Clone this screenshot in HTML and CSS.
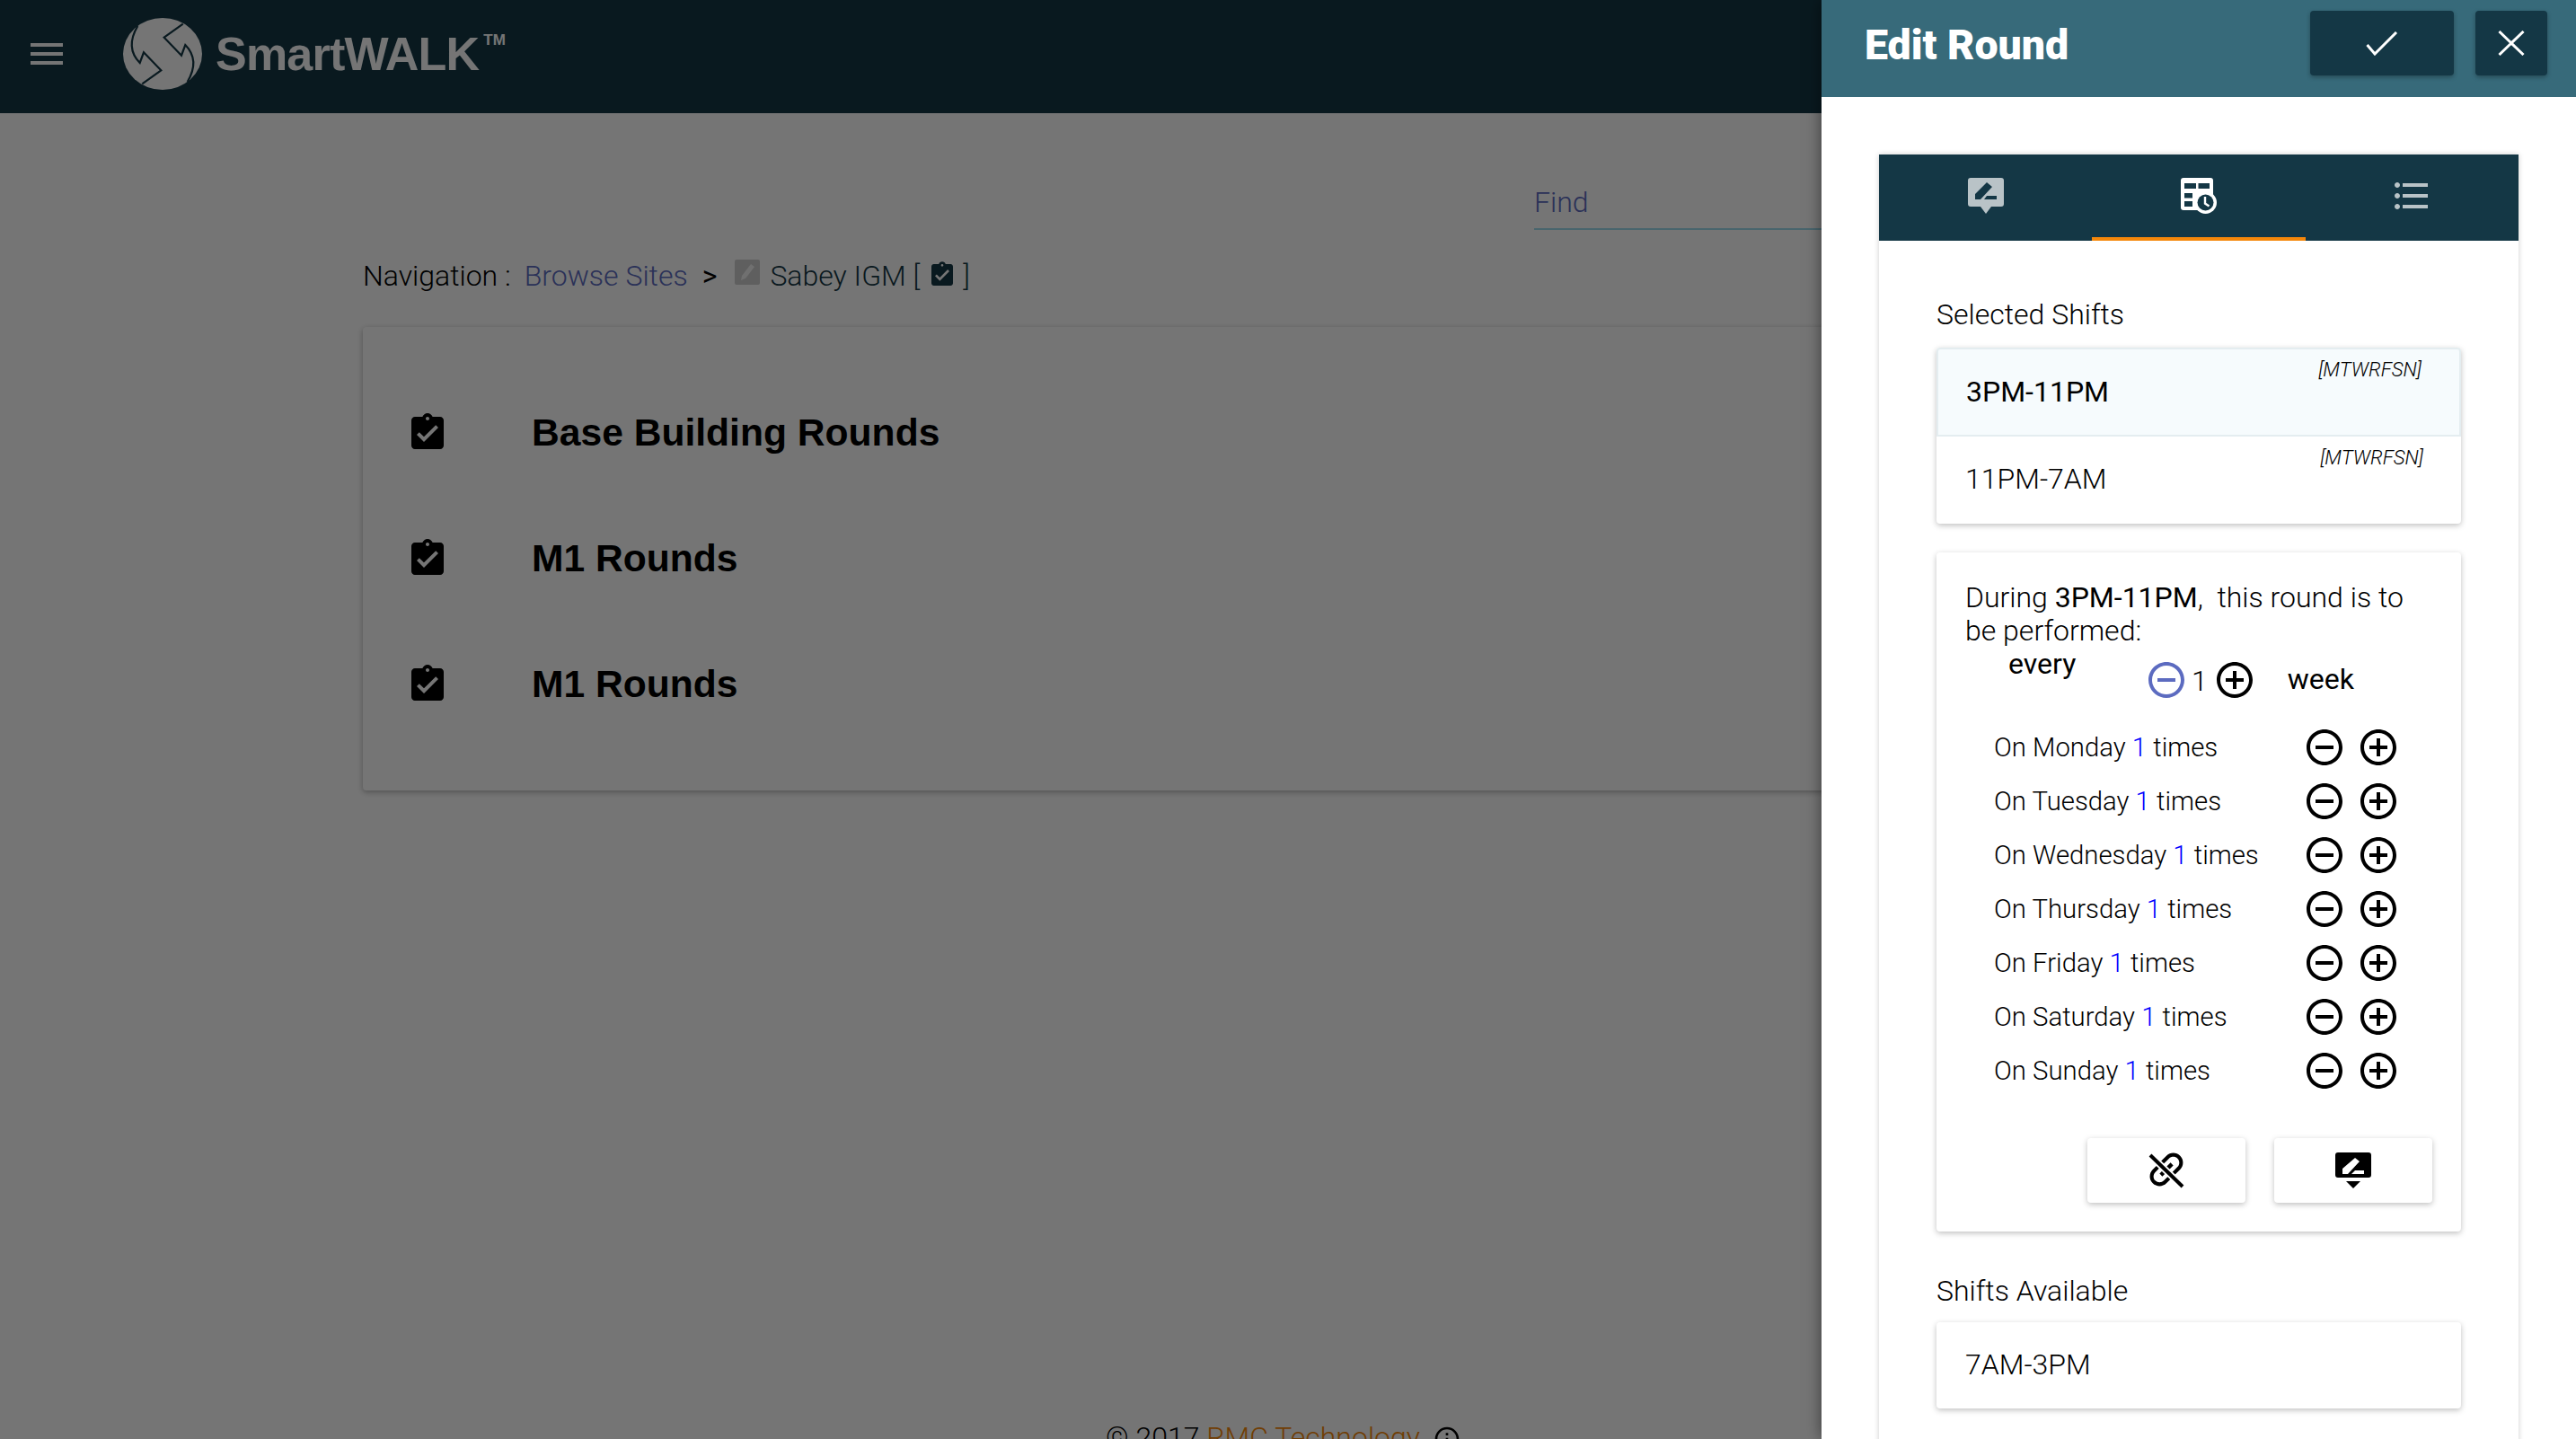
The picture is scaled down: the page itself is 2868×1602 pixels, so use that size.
FILE: index.html
```html
<!DOCTYPE html>
<html>
<head>
    <meta charset="UTF-8">
    <title>SmartWALK</title>
    <link rel="stylesheet" href="styles.css">
</head>
<body>
    <svg class="defs" width="0" height="0">
        <defs>
            <path id="i-minus" d="M7 11v2h10v-2H7zm5-9C6.48 2 2 6.48 2 12s4.48 10 10 10 10-4.48 10-10S17.52 2 12 2zm0 18c-4.41 0-8-3.59-8-8s3.59-8 8-8 8 3.59 8 8-3.59 8-8 8z"/>
            <path id="i-plus" d="M13 7h-2v4H7v2h4v4h2v-4h4v-2h-4V7zm-1-5C6.48 2 2 6.48 2 12s4.48 10 10 10 10-4.48 10-10S17.52 2 12 2zm0 18c-4.41 0-8-3.59-8-8s3.59-8 8-8 8 3.59 8 8-3.59 8-8 8z"/>
            <path id="i-round" d="M19 3h-4.18C14.4 1.84 13.3 1 12 1c-1.3 0-2.4.84-2.82 2H5c-1.1 0-2 .9-2 2v14c0 1.1.9 2 2 2h14c1.1 0 2-.9 2-2V5c0-1.1-.9-2-2-2zm-7 0c.55 0 1 .45 1 1s-.45 1-1 1-1-.45-1-1 .45-1 1-1zm-2 14l-4-4 1.41-1.41L10 14.17l6.59-6.59L18 9l-8 8z"/>
        </defs>
    </svg>

    <div class="page">
        <header class="topbar">
            <svg class="menu-icon" viewBox="0 0 24 24"><path d="M3 18h18v-2H3v2zm0-5h18v-2H3v2zm0-7v2h18V6H3z"/></svg>
            <svg class="logo" viewBox="0 0 88 80">
                <ellipse cx="44" cy="40" rx="44" ry="40" fill="#fff"/>
                <path class="logo-cut" d="M66.7 6.7L45.7 21.7 65 41.7 69.3 30Q86 47 71.7 71"/>
                <path class="logo-cut" d="M21.3 73.3L42.3 58.3 23 38.3 18.7 50Q2 33 16.3 9"/>
            </svg>
            <div class="brand">SmartWALK<span class="tm">TM</span></div>
        </header>

        <main class="content">
            <div class="find">Find</div>
            <nav class="crumbs">
                <span>Navigation :</span>
                <a class="crumb-link">Browse Sites</a>
                <span class="crumb-sep">&gt;</span>
                <svg class="crumb-thumb" viewBox="0 0 28 28">
                    <rect width="28" height="28" rx="2" fill="#cfcfcf"/>
                    <path d="M18 5l4 3-10 13-5 2 1-5z" fill="#f4f4f4"/>
                </svg>
                <span class="crumb-site">Sabey IGM [</span>
                <svg class="crumb-icon" viewBox="0 0 24 24"><use href="#i-round"/></svg>
                <span class="crumb-site crumb-end">]</span>
            </nav>

            <section class="rounds">
                <div class="round-row">
                    <svg class="round-icon" viewBox="0 0 24 24"><use href="#i-round"/></svg>
                    <span class="round-name">Base Building Rounds</span>
                </div>
                <div class="round-row">
                    <svg class="round-icon" viewBox="0 0 24 24"><use href="#i-round"/></svg>
                    <span class="round-name">M1 Rounds</span>
                </div>
                <div class="round-row">
                    <svg class="round-icon" viewBox="0 0 24 24"><use href="#i-round"/></svg>
                    <span class="round-name">M1 Rounds</span>
                </div>
            </section>

            <footer class="foot">
                <span>© 2017 <a class="foot-link">RMC Technology</a></span>
                <svg class="foot-icon" viewBox="0 0 24 24"><path d="M11 7h2v2h-2zm0 4h2v6h-2zm1-9C6.48 2 2 6.48 2 12s4.48 10 10 10 10-4.48 10-10S17.52 2 12 2zm0 18c-4.41 0-8-3.59-8-8s3.59-8 8-8 8 3.59 8 8-3.59 8-8 8z"/></svg>
            </footer>
        </main>
    </div>

    <div class="scrim"></div>

    <aside class="panel">
        <div class="panel-head">
            <h1>Edit Round</h1>
            <button class="head-btn head-ok">
                <svg viewBox="0 0 36 27" width="36" height="27"><path d="M1.5 15L10 25 34 1" fill="none" stroke="#fff" stroke-width="3"/></svg>
            </button>
            <button class="head-btn head-close">
                <svg viewBox="0 0 30 28" width="30" height="28"><path d="M1.5 1L28.500 27M28.500 1L1.500 27" fill="none" stroke="#fff" stroke-width="3"/></svg>
            </button>
        </div>

        <div class="panel-body">
            <div class="editor">
                <div class="tabs">
                    <div class="tab">
                        <svg class="tab-icon dim" viewBox="0 0 40 40"><path fill-rule="evenodd" d="M3 0h34a3 3 0 0 1 3 3v26a3 3 0 0 1-3 3H26l-6 8-6-8H3a3 3 0 0 1-3-3V3a3 3 0 0 1 3-3zM21 5l6 5-13 14H8v-6zM21 20h11v4H18z"/></svg>
                    </div>
                    <div class="tab active">
                        <svg class="tab-icon" viewBox="0 0 40 40">
                            <rect width="36" height="36" rx="3" fill="#fff"/>
                            <path fill="#143745" d="M4 6h13v6H4zM19.500 6H32v6H19.500zM4 17h9v5.500H4zM4 26h9v6H4z"/>
                            <circle cx="27.500" cy="27.500" r="12.500" fill="#fff"/>
                            <circle cx="27.500" cy="27.500" r="9" fill="#143745"/>
                            <path d="M27 21v7.500l4.500 3" fill="none" stroke="#fff" stroke-width="2.400"/>
                        </svg>
                    </div>
                    <div class="tab">
                        <svg class="tab-icon dim" viewBox="0 0 24 24"><path d="M4 10.500c-.83 0-1.500.67-1.500 1.500s.67 1.500 1.500 1.500 1.500-.67 1.500-1.500-.67-1.500-1.500-1.500zm0-6c-.83 0-1.500.67-1.500 1.500S3.170 7.500 4 7.500 5.500 6.830 5.500 6 4.830 4.500 4 4.500zm0 12c-.83 0-1.500.68-1.500 1.500s.68 1.500 1.500 1.500 1.500-.68 1.500-1.500-.67-1.500-1.500-1.500zM7 19h14v-2H7v2zm0-6h14v-2H7v2zm0-8v2h14V5H7z"/></svg>
                    </div>
                </div>

                <div class="editor-body">
                    <h2 class="section-title">Selected Shifts</h2>
                    <div class="card shift-list">
                        <div class="shift selected">
                            <span class="shift-name">3PM-11PM</span>
                            <span class="shift-days">[MTWRFSN]</span>
                        </div>
                        <div class="shift">
                            <span class="shift-name">11PM-7AM</span>
                            <span class="shift-days">[MTWRFSN]</span>
                        </div>
                    </div>

                    <div class="card schedule">
                        <p class="schedule-intro">During <b>3PM-11PM</b>,&nbsp; this round is to be performed:</p>
                        <div class="every">
                            <span class="every-label">every</span>
                            <svg class="step minus-on" viewBox="0 0 24 24"><use href="#i-minus"/></svg>
                            <span class="every-count">1</span>
                            <svg class="step" viewBox="0 0 24 24"><use href="#i-plus"/></svg>
                            <span class="every-unit">week</span>
                        </div>

                        <div class="day">
                            <span class="day-label">On Monday <em>1</em> times</span>
                            <svg class="step" viewBox="0 0 24 24"><use href="#i-minus"/></svg>
                            <svg class="step" viewBox="0 0 24 24"><use href="#i-plus"/></svg>
                        </div>
                        <div class="day">
                            <span class="day-label">On Tuesday <em>1</em> times</span>
                            <svg class="step" viewBox="0 0 24 24"><use href="#i-minus"/></svg>
                            <svg class="step" viewBox="0 0 24 24"><use href="#i-plus"/></svg>
                        </div>
                        <div class="day">
                            <span class="day-label">On Wednesday <em>1</em> times</span>
                            <svg class="step" viewBox="0 0 24 24"><use href="#i-minus"/></svg>
                            <svg class="step" viewBox="0 0 24 24"><use href="#i-plus"/></svg>
                        </div>
                        <div class="day">
                            <span class="day-label">On Thursday <em>1</em> times</span>
                            <svg class="step" viewBox="0 0 24 24"><use href="#i-minus"/></svg>
                            <svg class="step" viewBox="0 0 24 24"><use href="#i-plus"/></svg>
                        </div>
                        <div class="day">
                            <span class="day-label">On Friday <em>1</em> times</span>
                            <svg class="step" viewBox="0 0 24 24"><use href="#i-minus"/></svg>
                            <svg class="step" viewBox="0 0 24 24"><use href="#i-plus"/></svg>
                        </div>
                        <div class="day">
                            <span class="day-label">On Saturday <em>1</em> times</span>
                            <svg class="step" viewBox="0 0 24 24"><use href="#i-minus"/></svg>
                            <svg class="step" viewBox="0 0 24 24"><use href="#i-plus"/></svg>
                        </div>
                        <div class="day">
                            <span class="day-label">On Sunday <em>1</em> times</span>
                            <svg class="step" viewBox="0 0 24 24"><use href="#i-minus"/></svg>
                            <svg class="step" viewBox="0 0 24 24"><use href="#i-plus"/></svg>
                        </div>

                        <div class="actions">
                            <button class="action-btn">
                                <svg class="action-icon" viewBox="0 0 24 24">
                                    <g transform="translate(12 11.500) rotate(-45) scale(1.080) translate(-12 -12)">
                                        <path d="M3.900 12c0-1.710 1.390-3.100 3.100-3.100h4V7H7c-2.760 0-5 2.240-5 5s2.240 5 5 5h4v-1.900H7c-1.710 0-3.100-1.390-3.100-3.100zM8 13h8v-2H8v2zm9-6h-4v1.900h4c1.710 0 3.100 1.390 3.100 3.100s-1.390 3.100-3.100 3.100h-4V17h4c2.760 0 5-2.240 5-5s-2.240-5-5-5z"/>
                                    </g>
                                    <path d="M3 3.500L21 21" stroke="#fff" stroke-width="4"/>
                                    <path d="M3 3.500L21 21" stroke="#000" stroke-width="2"/>
                                </svg>
                            </button>
                            <button class="action-btn">
                                <svg class="action-icon-sm" viewBox="0 0 40 40"><path fill-rule="evenodd" d="M3 0h34a3 3 0 0 1 3 3v22a3 3 0 0 1-3 3H3a3 3 0 0 1-3-3V3a3 3 0 0 1 3-3zM22 6l5 4-13 14H8v-6zM22 20h10v4H18zM12 32h16l-8 8z"/></svg>
                            </button>
                        </div>
                    </div>

                    <h2 class="section-title section-gap">Shifts Available</h2>
                    <div class="card shift-list">
                        <div class="shift shift-plain">7AM-3PM</div>
                    </div>
                </div>
            </div>
        </div>
    </aside>
</body>
</html>
```

FILE: styles.css
```css
* {
    box-sizing: border-box;
}
html, body {
    height: 100%;
}
body {
    margin: 0;
    overflow: hidden;
    background-color: #fff;
    color: #000;
    font-family: Roboto, "Liberation Sans", sans-serif;
    font-weight: 300;
    font-size: 32px;
    line-height: 37px;
}
.defs {
    position: absolute;
}
h1, h2, p {
    margin: 0;
}
svg {
    display: block;
    flex: none;
}
button {
    border: none;
    padding: 0;
    display: flex;
    align-items: center;
    justify-content: center;
}

/* top bar */
.topbar {
    height: 126px;
    background-color: #143745;
    display: flex;
    align-items: center;
    color: #fff;
    padding: 0 0 6px 28px;
}
.menu-icon {
    width: 48px;
    height: 48px;
    fill: #fff;
}
.logo {
    width: 88px;
    height: 80px;
    margin-left: 61px;
}
.logo-cut {
    fill: none;
    stroke: #143745;
    stroke-width: 2.200;
}
.brand {
    margin-left: 15px;
    font-family: "Liberation Sans", sans-serif;
    font-weight: 700;
    font-size: 52px;
    letter-spacing: -.800px;
    line-height: 60px;
    display: flex;
}
.tm {
    font-size: 17px;
    letter-spacing: 0;
    line-height: 24px;
    margin-left: 5px;
    margin-top: 3px;
}

/* page under the panel */
.content {
    padding: 81px 404px 0;
}
.find {
    width: 756px;
    margin-left: auto;
    height: 49px;
    padding-bottom: 10px;
    border-bottom: 2px solid #a0dcee;
    color: #5c6bc0;
    font-weight: 300;
}
.crumbs {
    display: flex;
    align-items: center;
    margin-top: 33px;
    height: 37px;
}
.crumb-link {
    color: #5c6bc0;
    margin-left: 15px;
}
.crumb-sep {
    margin-left: 16px;
    font-weight: 400;
}
.crumb-thumb {
    width: 28px;
    height: 28px;
    margin-left: 20px;
    margin-top: -10px;
}
.crumb-site {
    color: #143745;
    margin-left: 11px;
}
.crumb-icon {
    width: 32px;
    height: 32px;
    margin-left: 9px;
    margin-top: -3px;
    fill: #143745;
}
.crumb-end {
    margin-left: 7px;
}
.rounds {
    margin-top: 38px;
    padding: 48px;
    width: 2060px;
    background-color: #fff;
    border-radius: 4px;
    box-shadow: 0 2px 6px rgba(0, 0, 0, .3);
}
.round-row {
    display: flex;
    align-items: center;
    height: 140px;
    gap: 92px;
    font-family: "Liberation Sans", sans-serif;
    font-weight: 700;
    font-size: 42.600px;
}
.round-name {
    margin-top: -2px;
}
.round-icon {
    width: 48px;
    height: 48px;
}
.foot {
    margin-top: 702px;
    display: flex;
    justify-content: center;
    align-items: flex-start;
    gap: 14px;
    width: 2050px;
}
.foot-link {
    color: #f5870a;
}
.foot-icon {
    width: 32px;
    height: 32px;
    margin-top: 4px;
}

/* dim layer and side panel */
.scrim {
    position: absolute;
    inset: 0;
    background-color: rgba(0, 0, 0, .54);
}
.panel {
    position: absolute;
    top: 0;
    right: 0;
    bottom: 0;
    width: 840px;
    overflow: hidden;
    background-color: #fff;
    box-shadow: 0 0 16px rgba(0, 0, 0, .5);
}
.panel-head {
    height: 108px;
    background-color: #376a7a;
    display: flex;
    align-items: flex-start;
    padding: 12px 32px 0 48px;
}
.panel-head h1 {
    font-family: Roboto, "Liberation Sans", sans-serif;
    font-weight: 900;
    font-size: 46.500px;
    line-height: 50px;
    color: #fff;
    margin-right: auto;
    margin-top: 13px;
}
.head-btn {
    height: 72px;
    background-color: #143745;
    border-radius: 4px;
    box-shadow: 0 2px 5px rgba(0, 0, 0, .3);
}
.head-ok {
    width: 160px;
}
.head-close {
    width: 80px;
    margin-left: 24px;
}
.panel-body {
    padding: 64px 64px 0;
}
.editor {
    box-shadow: 0 0 6px rgba(0, 0, 0, .2);
    min-height: 1500px;
}
.tabs {
    height: 96px;
    background-color: #143745;
    display: flex;
}
.tab {
    flex: 1;
    padding-top: 22px;
    display: flex;
    justify-content: center;
}
.tab.active {
    border-bottom: 4px solid #f5870a;
}
.tab-icon {
    width: 40px;
    height: 40px;
    margin-top: 4px;
    fill: #fff;
}
.tab-icon.dim {
    fill: rgba(255, 255, 255, .7);
}
.tab:last-child .tab-icon {
    width: 48px;
    height: 48px;
    margin-top: 0;
}
.editor-body {
    padding: 64px 64px 0;
}
.section-title {
    font-size: 32px;
    font-weight: 300;
    line-height: 37px;
    margin-bottom: 18px;
}
.section-gap {
    margin-top: 48px;
    margin-bottom: 16px;
}
.card {
    background-color: #fff;
    border-radius: 4px;
    box-shadow: 0 2px 6px rgba(0, 0, 0, .25);
}
.shift {
    height: 97px;
    display: flex;
    justify-content: space-between;
    align-items: flex-start;
    padding: 10px 42px 0 32px;
}
.shift.selected {
    height: 99px;
    background-color: #f6fbfd;
    border: 2px solid #e4edf0;
    border-radius: 4px 4px 0 0;
    padding: 9px 42px 0 31px;
    font-weight: 400;
}
.shift-name {
    margin-top: 19px;
}
.shift.selected .shift-name {
    margin-top: 20px;
}
.shift-days {
    font-size: 22.200px;
    line-height: 26px;
    font-style: italic;
    font-weight: 300;
}
.shift-plain {
    display: block;
    height: 96px;
    padding: 29px 0 0 32px;
}
.schedule {
    margin-top: 32px;
    padding: 32px 32px 32px 32px;
}
.schedule-intro b {
    font-weight: 400;
}
.every {
    display: flex;
    align-items: flex-start;
    padding-left: 48px;
    margin-top: 2px;
    height: 59px;
    font-weight: 400;
}
.every-label {
    width: 152px;
    margin-top: -2px;
}
.step {
    width: 48px;
    height: 48px;
    margin-top: 10px;
}
.minus-on {
    fill: #5c6bc0;
}
.every-count {
    font-weight: 300;
    margin: 17px 6px 0 4px;
}
.every-unit {
    margin-left: 35px;
    margin-top: 15px;
}
.every + .day {
    margin-top: 20px;
}
.day {
    display: flex;
    align-items: center;
    gap: 12px;
    height: 60px;
    padding: 0 36px 0 32px;
    font-size: 29.300px;
}
.day .step {
    margin-top: 0;
}
.day-label {
    margin-right: auto;
}
.day-label em {
    font-style: normal;
    color: #0000ff;
}
.actions {
    display: flex;
    justify-content: flex-end;
    gap: 32px;
    margin-top: 45px;
}
.action-btn {
    width: 176px;
    height: 72px;
    background-color: #fff;
    border-radius: 4px;
    box-shadow: 0 2px 6px rgba(0, 0, 0, .25);
}
.action-icon {
    width: 48px;
    height: 48px;
}
.action-icon-sm {
    width: 40px;
    height: 40px;
}
```
